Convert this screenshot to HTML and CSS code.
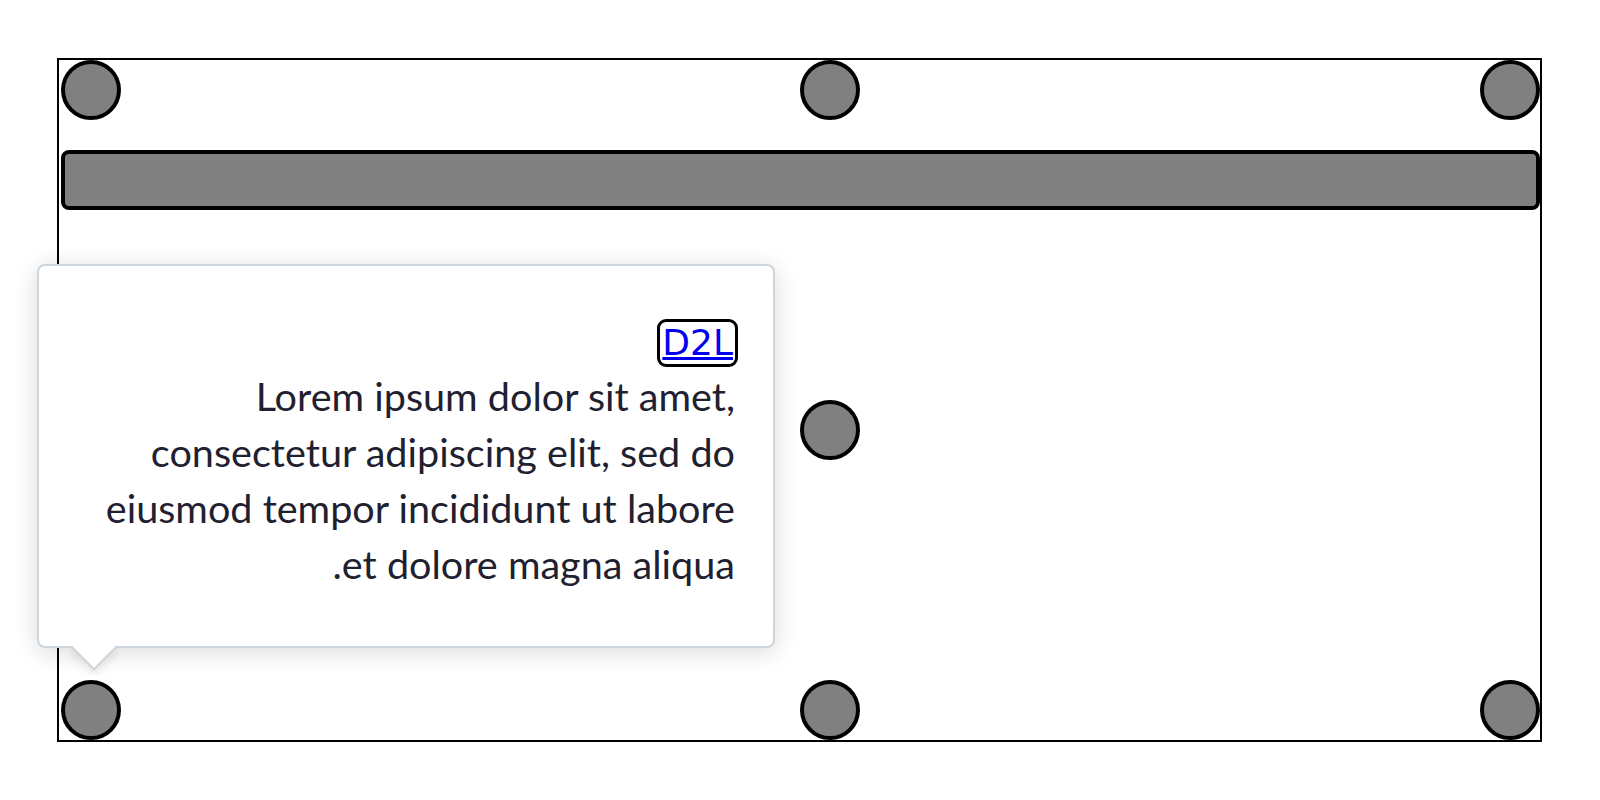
FILE: index.html
```html
<!DOCTYPE html>
<html lang="en">
<head>
<meta charset="utf-8">
<title>Tooltip</title>
<link rel="stylesheet" href="styles.css">
</head>
<body>
<div class="stage">
  <div class="target circle c-tl"></div>
  <div class="target circle c-tm"></div>
  <div class="target circle c-tr"></div>
  <div class="target bar"></div>
  <div class="target circle c-mid"></div>
  <div class="target circle c-bl"></div>
  <div class="target circle c-bm"></div>
  <div class="target circle c-br"></div>
</div>
<div class="tooltip" role="tooltip">
  <div class="tooltip-content" dir="rtl">
    <a class="tip-link" href="#">D2L</a><br>
    Lorem ipsum dolor sit amet, consectetur adipiscing elit, sed do eiusmod tempor incididunt ut labore et dolore magna aliqua.
  </div>
  <div class="pointer"><div class="pointer-square"></div></div>
</div>
</body>
</html>
```
FILE: styles.css
```css
html, body {
  margin: 0;
  padding: 0;
  background: #fff;
}
body {
  position: relative;
  width: 1600px;
  height: 800px;
  overflow: hidden;
}
.stage {
  box-sizing: content-box;
  margin: 58px 0 0 57px;
  width: 1481px;
  height: 680px;
  border: 2px solid #000;
  display: grid;
  grid-template-columns: 2px 60px 679px 60px 620px 60px;
  grid-template-rows: 60px 30px 60px 190px 60px 220px 60px;
}
.target {
  box-sizing: border-box;
  background: #808080;
  border: 4px solid #000;
}
.circle {
  width: 60px;
  height: 60px;
  border-radius: 50%;
}
.c-tl { grid-column: 2; grid-row: 1; }
.c-tm { grid-column: 4; grid-row: 1; }
.c-tr { grid-column: 6; grid-row: 1; }
.bar {
  grid-column: 2 / 7;
  grid-row: 3;
  border-radius: 8px;
}
.c-mid { grid-column: 4; grid-row: 5; }
.c-bl { grid-column: 2; grid-row: 7; }
.c-bm { grid-column: 4; grid-row: 7; }
.c-br { grid-column: 6; grid-row: 7; }

.tooltip {
  position: absolute;
  left: 37px;
  top: 264px;
  box-sizing: border-box;
  width: 738px;
  height: 384px;
  padding: 46px 38px 0 37px;
  background: #fff;
  border: 2px solid #cdd5dc;
  border-radius: 8px;
  box-shadow: 0 4px 24px rgba(0, 0, 0, 0.15);
  z-index: 2;
}
.tooltip-content {
  font-family: Lato, "Noto Sans", sans-serif;
  font-size: 39.6px;
  line-height: 56px;
  color: #1f2030;
  text-align: right;
}
.tip-link {
  display: inline-block;
  font-family: "DejaVu Sans", sans-serif;
  font-size: 36px;
  line-height: 42px;
  padding: 0 2px;
  color: #0000ee;
  text-decoration: underline;
  outline: 3px solid #000;
  border-radius: 6px;
}
.pointer {
  position: absolute;
  left: 30px;
  top: 100%;
  width: 50px;
  height: 30px;
  overflow: hidden;
}
.pointer-square {
  position: absolute;
  left: 9px;
  top: -14px;
  width: 32px;
  height: 32px;
  box-sizing: border-box;
  background: #fff;
  border-right: 2px solid #cdd5dc;
  border-bottom: 2px solid #cdd5dc;
  transform: rotate(45deg);
  box-shadow: 3px 3px 10px rgba(0, 0, 0, 0.1);
}
```
